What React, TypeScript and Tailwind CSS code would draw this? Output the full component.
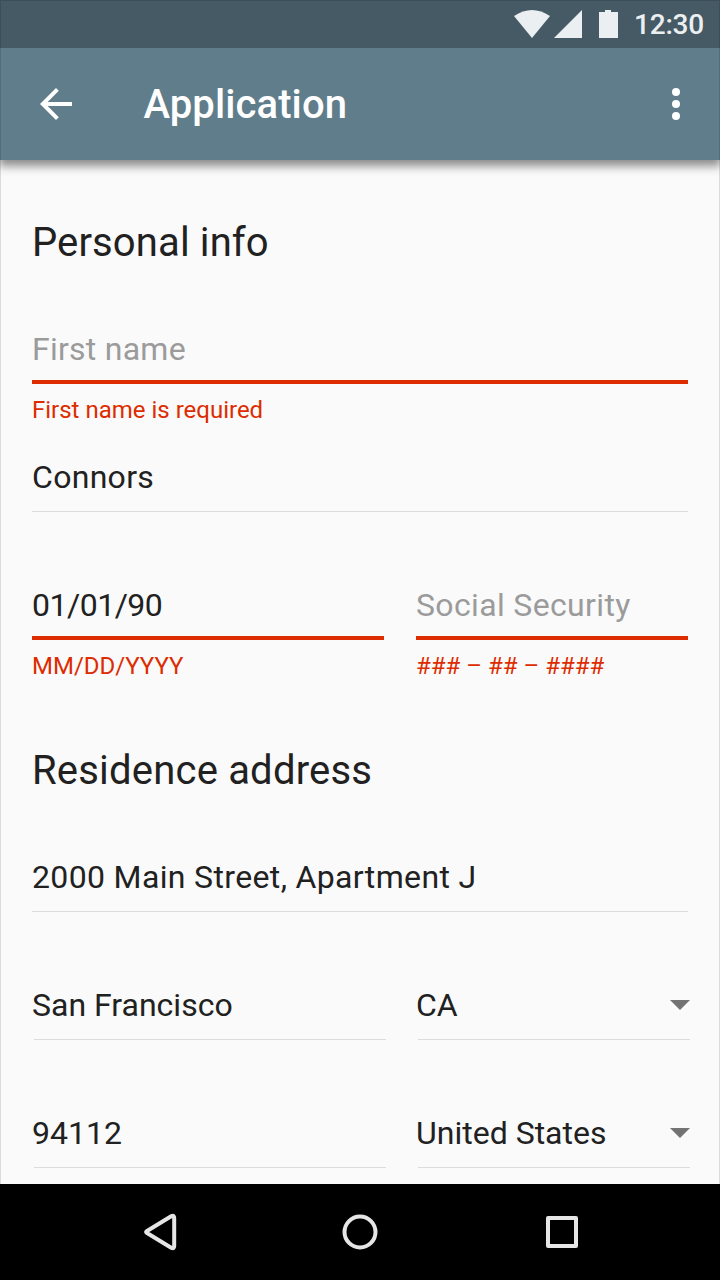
import React from "react";

type FieldProps = {
  value: string;
  className?: string;
  tracking?: string;
  placeholder?: boolean;
  error?: string;
  select?: boolean;
  line?: string;
};

function Field({ value, className = "", tracking = "tracking-[0px]", placeholder = false, error, select = false, line = "" }: FieldProps) {
  return (
    <div className={`h-32 ${className}`}>
      <div className="flex h-[60px] items-center justify-between pb-0.5">
        <span className={`text-[32px] leading-[58px] whitespace-nowrap ${tracking} ${placeholder ? "text-[#9b9b9b]" : "text-[#212121]"}`}>{value}</span>
        {select && (
          <svg className="-mr-0.5 h-[10px] w-5" viewBox="0 0 20 10"><path d="M0 0h20L10 10z" fill="#737373" /></svg>
        )}
      </div>
      {error ? <div className="h-1 bg-[#dd2c00]" /> : <div className={`mt-[3px] h-px bg-[#dcdcdc] ${line}`} />}
      {error && <div className="pt-3 text-2xl leading-7 whitespace-nowrap text-[#dd2c00]">{error}</div>}
    </div>
  );
}

export default function App() {
  return (
    <div className="relative flex h-[1280px] w-[720px] flex-col overflow-hidden bg-[#fafafa] font-['Roboto',sans-serif]">
      <div className="relative z-20 flex h-12 shrink-0 items-center justify-end bg-[#455a64] pr-4 text-white">
        <svg className="h-12 w-[120px]" viewBox="0 0 120 48" fill="#eceff1">
          <path d="M0 16Q18 4 36 16L18 38z" /><path d="M68 10v28H40z" /><path d="M91 10h6v2h7v26H85V12h6z" />
        </svg>
        <span className="w-[70px] pt-0.5 text-[28px] leading-[46px] font-medium tracking-[-0.2px] text-[#eceff1]">12:30</span>
      </div>
      <header className="relative z-10 flex h-28 shrink-0 items-center bg-[#607d8b] px-8 text-white shadow-[0_5px_9px_1px_rgba(0,0,0,0.45)]">
        <svg className="size-12" viewBox="0 0 24 24" fill="currentColor"><path d="M20 11H7.83l5.59-5.59L12 4l-8 8 8 8 1.41-1.41L7.83 13H20z" /></svg>
        <h1 className="ml-[63.5px] flex-1 pt-0.5 text-[40px] font-medium tracking-[0.1px]">Application</h1>
        <svg className="-mr-3 size-12" viewBox="0 0 24 24" fill="currentColor"><circle cx="12" cy="6" r="2" /><circle cx="12" cy="12" r="2" /><circle cx="12" cy="18" r="2" /></svg>
      </header>
      <main className="h-[1024px] px-8 pt-[51px] text-[#212121]">
        <h2 className="h-[109px] text-[40px] leading-[64px] tracking-[0.12px]">Personal info</h2>
        <Field value="First name" tracking="tracking-[0.25px]" placeholder error="First name is required" />
        <Field value="Connors" tracking="tracking-[0.3px]" />
        <div className="flex gap-8">
          <Field className="w-[352px]" value="01/01/90" tracking="tracking-[-0.5px]" error="MM/DD/YYYY" />
          <Field className="w-[272px]" value="Social Security" tracking="tracking-[0.35px]" placeholder error="### – ## – ####" />
        </div>
        <h2 className="mt-[35px] h-[109px] text-[40px] leading-[64px] tracking-[0.2px]">Residence address</h2>
        <Field value="2000 Main Street, Apartment J" tracking="tracking-[0.35px]" />
        <div className="flex gap-8">
          <Field className="w-[352px]" value="San Francisco" line="relative left-0.5" />
          <Field className="w-[272px]" value="CA" select line="relative left-0.5" />
        </div>
        <div className="flex gap-8">
          <Field className="w-[352px]" value="94112" line="relative left-0.5" />
          <Field className="w-[272px]" value="United States" select line="relative left-0.5" />
        </div>
      </main>
      <nav className="relative z-10 h-24 shrink-0 bg-black">
        <svg className="size-full" viewBox="0 0 720 96" fill="none" stroke="#e6e6e6" strokeWidth="4" strokeLinejoin="round"><path d="M146.6 47.2L171.6 32q2.6-1 2.6 2v28q0 3-2.6 2L146.6 48.8q-1-.8 0-1.6z" /><circle cx="360" cy="48" r="15.5" /><path d="M548 34h28v28h-28z" /></svg>
      </nav>
      <div className="pointer-events-none absolute inset-0 z-30 border border-black/12" />
    </div>
  );
}
